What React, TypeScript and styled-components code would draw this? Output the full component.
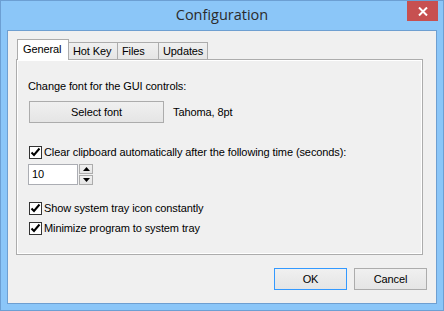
import React from 'react';
import styled, { createGlobalStyle } from 'styled-components';

const GlobalStyle = createGlobalStyle`
  body {
    margin: 0;
    background: #ffffff;
    font-family: 'Liberation Sans', Arial, sans-serif;
    font-size: 11px;
    letter-spacing: -0.1px;
    color: #000;
  }
`;

const Window = styled.div`
  box-sizing: border-box;
  width: 444px;
  height: 311px;
  background: #8bc6f8;
  border: 1px solid #6c9fd3;
  padding: 0 6px 6px;
  display: flex;
  flex-direction: column;
`;

const TitleBar = styled.div`
  height: 29px;
  display: grid;
  grid-template-columns: 1fr auto 1fr;
  align-items: start;
`;

const Title = styled.div`
  grid-column: 2;
  font-family: 'Open Sans', 'Noto Sans', sans-serif;
  font-size: 14.5px;
  letter-spacing: 0;
  color: #2b2b2b;
  line-height: 20px;
  padding-top: 4px;
`;

const CloseButton = styled.div`
  grid-column: 3;
  justify-self: end;
  width: 31px;
  height: 20px;
  margin-right: -1px;
  background: #c75050;
  display: flex;
  align-items: center;
  justify-content: center;
`;

const Client = styled.div`
  flex: 1;
  background: #f0f0f0;
  border: 1px solid #6e9fd1;
  padding: 8px 9px 12px 8px;
  display: flex;
  flex-direction: column;
`;

const TabStrip = styled.div`
  display: flex;
  align-items: flex-end;
  height: 21px;
  padding-left: 1px;
  margin-bottom: -1px;
  position: relative;
  z-index: 1;
`;

const Tab = styled.div<{ $active?: boolean; $w: number }>`
  box-sizing: border-box;
  width: ${({ $w }) => $w}px;
  height: ${({ $active }) => ($active ? 21 : 18)}px;
  border: 1px solid #acacac;
  border-bottom: ${({ $active }) => ($active ? 'none' : '1px solid #acacac')};
  margin-left: ${({ $active }) => ($active ? 0 : -1)}px;
  background: ${({ $active }) =>
    $active ? '#ffffff' : 'linear-gradient(#f0f0f0, #e5e5e5)'};
  padding-left: ${({ $active }) => ($active ? 5 : 4)}px;
  line-height: ${({ $active }) => ($active ? 18 : 16)}px;
  font-size: 11px;
  &:first-child {
    margin-left: 0;
  }
`;

const Panel = styled.div`
  box-sizing: border-box;
  width: 407px;
  height: 196px;
  border: 1px solid #acacac;
  box-shadow: inset 0 0 0 1px #ffffff;
  padding: 20px 12px 0 11px;
  display: flex;
  flex-direction: column;
`;

const Label = styled.div`
  line-height: 13px;
`;

const FontRow = styled.div`
  display: flex;
  align-items: center;
  gap: 9px;
  margin-top: 8px;
  padding-left: 1px;
`;

const Button = styled.div<{ $w: number; $focus?: boolean }>`
  box-sizing: border-box;
  width: ${({ $w }) => $w}px;
  height: 22px;
  border: 1px solid ${({ $focus }) => ($focus ? '#3399ff' : '#acacac')};
  background: linear-gradient(#f0f0f0, #e5e5e5);
  display: flex;
  align-items: center;
  justify-content: center;
  font-size: 11px;
`;

const CheckRow = styled.label<{ $top: number }>`
  display: flex;
  align-items: center;
  gap: 2px;
  margin-top: ${({ $top }) => $top}px;
  padding-left: 1px;
  line-height: 13px;
`;

const Box = styled.span`
  box-sizing: border-box;
  width: 13px;
  height: 13px;
  border: 1px solid #333333;
  background: #ffffff;
  display: flex;
  align-items: center;
  justify-content: center;
`;

const SpinRow = styled.div`
  display: flex;
  gap: 1px;
  margin-top: 5px;
`;

const NumberBox = styled.div`
  box-sizing: border-box;
  width: 50px;
  height: 21px;
  border: 1px solid #abadb3;
  background: #ffffff;
  padding-left: 3px;
  line-height: 19px;
`;

const Spinner = styled.div`
  display: flex;
  flex-direction: column;
  gap: 1px;
`;

const SpinButton = styled.div`
  box-sizing: border-box;
  width: 14px;
  height: 10px;
  border: 1px solid #acacac;
  background: linear-gradient(#f0f0f0, #e5e5e5);
  display: flex;
  align-items: center;
  justify-content: center;
`;

const ButtonRow = styled.div`
  display: flex;
  justify-content: flex-end;
  gap: 7px;
  margin-top: 13px;
`;

const Check = () => (
  <Box>
    <svg width="11" height="11" viewBox="0 0 11 11">
      <path d="M1.5 5.5 L4 8 L9.5 1.5" fill="none" stroke="#000" strokeWidth="2" />
    </svg>
  </Box>
);

const Arrow = ({ up }: { up?: boolean }) => (
  <svg width="7" height="4" viewBox="0 0 7 4">
    <path d={up ? 'M0 4 L3.5 0 L7 4 Z' : 'M0 0 L3.5 4 L7 0 Z'} fill="#000" />
  </svg>
);

const App: React.FC = () => {
  return (
    <>
      <GlobalStyle />
      <Window>
        <TitleBar>
          <Title>Configuration</Title>
          <CloseButton>
            <svg width="10" height="9" viewBox="0 0 10 9">
              <path d="M1 0.5 L9 8.5 M9 0.5 L1 8.5" stroke="#fff" strokeWidth="2" />
            </svg>
          </CloseButton>
        </TitleBar>
        <Client>
          <TabStrip>
            <Tab $active $w={52}>General</Tab>
            <Tab $w={50}>Hot Key</Tab>
            <Tab $w={42}>Files</Tab>
            <Tab $w={50}>Updates</Tab>
          </TabStrip>
          <Panel>
            <Label>Change font for the GUI controls:</Label>
            <FontRow>
              <Button $w={135}>Select font</Button>
              <span>Tahoma, 8pt</span>
            </FontRow>
            <CheckRow $top={23}>
              <Check />
              Clear clipboard automatically after the following time (seconds):
            </CheckRow>
            <SpinRow>
              <NumberBox>10</NumberBox>
              <Spinner>
                <SpinButton>
                  <Arrow up />
                </SpinButton>
                <SpinButton>
                  <Arrow />
                </SpinButton>
              </Spinner>
            </SpinRow>
            <CheckRow $top={17}>
              <Check />
              Show system tray icon constantly
            </CheckRow>
            <CheckRow $top={7}>
              <Check />
              Minimize program to system tray
            </CheckRow>
          </Panel>
          <ButtonRow>
            <Button $w={73} $focus>OK</Button>
            <Button $w={73}>Cancel</Button>
          </ButtonRow>
        </Client>
      </Window>
    </>
  );
};

export default App;
